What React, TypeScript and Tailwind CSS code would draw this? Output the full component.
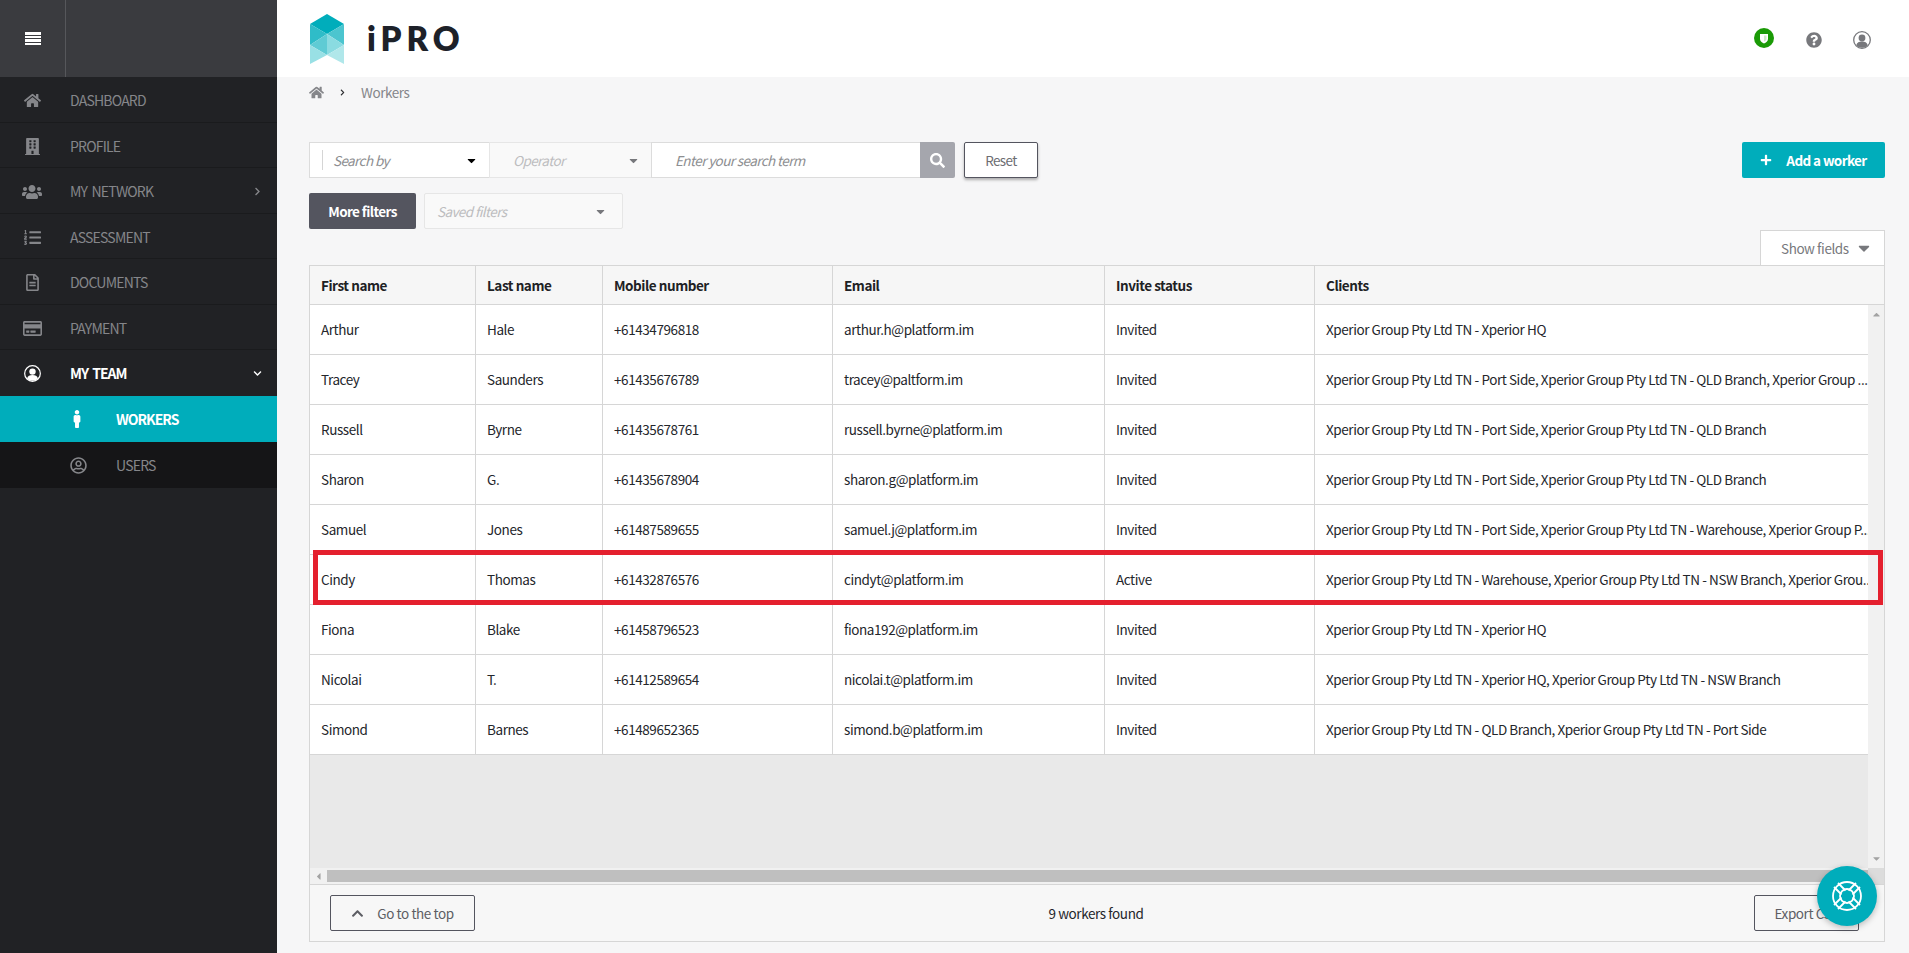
import React from 'react';
import {
  FaHome,
  FaBuilding,
  FaUsers,
  FaListOl,
  FaRegFileAlt,
  FaRegCreditCard,
  FaRegUserCircle,
  FaMale,
  FaQuestionCircle,
  FaSearch,
  FaChevronUp,
  FaPlus,
  FaChevronRight,
  FaChevronDown,
  FaCaretDown,
  FaCaretUp,
  FaCaretLeft,
} from 'react-icons/fa';

const menu = [
  { label: 'DASHBOARD', icon: <FaHome size={17} /> },
  { label: 'PROFILE', icon: <FaBuilding size={17} /> },
  { label: 'MY NETWORK', icon: <FaUsers size={20} />, chevron: true },
  { label: 'ASSESSMENT', icon: <FaListOl size={17} /> },
  { label: 'DOCUMENTS', icon: <FaRegFileAlt size={17} /> },
  { label: 'PAYMENT', icon: <FaRegCreditCard size={19} /> },
];

const rows = [
  ['Arthur', 'Hale', '+61434796818', 'arthur.h@platform.im', 'Invited', 'Xperior Group Pty Ltd TN - Xperior HQ'],
  ['Tracey', 'Saunders', '+61435676789', 'tracey@paltform.im', 'Invited', 'Xperior Group Pty Ltd TN - Port Side, Xperior Group Pty Ltd TN - QLD Branch, Xperior Group ...'],
  ['Russell', 'Byrne', '+61435678761', 'russell.byrne@platform.im', 'Invited', 'Xperior Group Pty Ltd TN - Port Side, Xperior Group Pty Ltd TN - QLD Branch'],
  ['Sharon', 'G.', '+61435678904', 'sharon.g@platform.im', 'Invited', 'Xperior Group Pty Ltd TN - Port Side, Xperior Group Pty Ltd TN - QLD Branch'],
  ['Samuel', 'Jones', '+61487589655', 'samuel.j@platform.im', 'Invited', 'Xperior Group Pty Ltd TN - Port Side, Xperior Group Pty Ltd TN - Warehouse, Xperior Group P...'],
  ['Cindy', 'Thomas', '+61432876576', 'cindyt@platform.im', 'Active', 'Xperior Group Pty Ltd TN - Warehouse, Xperior Group Pty Ltd TN - NSW Branch, Xperior Grou...'],
  ['Fiona', 'Blake', '+61458796523', 'fiona192@platform.im', 'Invited', 'Xperior Group Pty Ltd TN - Xperior HQ'],
  ['Nicolai', 'T.', '+61412589654', 'nicolai.t@platform.im', 'Invited', 'Xperior Group Pty Ltd TN - Xperior HQ, Xperior Group Pty Ltd TN - NSW Branch'],
  ['Simond', 'Barnes', '+61489652365', 'simond.b@platform.im', 'Invited', 'Xperior Group Pty Ltd TN - QLD Branch, Xperior Group Pty Ltd TN - Port Side'],
];

const headers = ['First name', 'Last name', 'Mobile number', 'Email', 'Invite status', 'Clients'];

function Logo() {
  return (
    <div className="flex items-center">
      <svg width="36" height="50" viewBox="0 0 36 50">
        <polygon points="18,0 35,10 18,20 1,10" fill="#00adbb" />
        <polygon points="1,10 18,20 1,31" fill="#2fbcc8" />
        <polygon points="35,10 18,20 35,31" fill="#4cc5cf" />
        <polygon points="18,20 18,41 1,31" fill="#5fcbd4" />
        <polygon points="18,20 18,41 35,31" fill="#8adbe1" />
        <polygon points="1,31 18,41 1,50" fill="#99e0e5" />
        <polygon points="35,31 18,41 35,50" fill="#b0e7ea" />
      </svg>
      <span className="ml-[22px] font-['Lato',sans-serif] text-[33px] font-extrabold tracking-[5px] text-[#1d2129] leading-none">iPRO</span>
    </div>
  );
}

// ring with a person cut off by the circle, used in the top bar and for MY TEAM
function UserRing({ size, color }: { size: number; color: string }) {
  return (
    <svg width={size} height={size} viewBox="0 0 18 18">
      <circle cx="9" cy="9" r="8.300" fill="none" stroke={color} strokeWidth="1.300" />
      <circle cx="9" cy="7" r="3.400" fill={color} />
      <path d="M3.200 14.200C4 11.500 6 10.600 9 10.600s5 .9 5.800 3.600A7.500 7.500 0 0 1 9 16.800a7.500 7.500 0 0 1-5.800-2.600z" fill={color} />
    </svg>
  );
}

function LifeRing() {
  return (
    <svg width="32" height="32" viewBox="0 0 32 32" fill="none" stroke="#fff" strokeWidth="1.800">
      <circle cx="16" cy="16" r="14" />
      <circle cx="16" cy="16" r="7" />
      <path d="M8.500 4.500l7.500 7.500M4.500 8.500l7.500 7.500" transform="translate(-1.500 -1.500)" />
      <path d="M23.500 4.500L16 12M27.500 8.500L20 16" transform="translate(1.500 -1.500)" />
      <path d="M8.500 27.500L16 20M4.500 23.500L12 16" transform="translate(-1.500 1.500)" />
      <path d="M23.500 27.500L16 20M27.500 23.500L20 16" transform="translate(1.500 1.500)" />
    </svg>
  );
}

function Sidebar() {
  return (
    <aside className="w-[277px] shrink-0 bg-[#212225] text-[14px] tracking-[-0.8px] [word-spacing:2px]">
      <div className="flex h-[77px] bg-[#3a3b3f]">
        <div className="flex w-[66px] items-center justify-center border-r border-[#56575b]">
          <div className="flex h-[13px] w-[16px] flex-col justify-between">
            <span className="h-[2.5px] bg-white" />
            <span className="h-[2.5px] bg-white" />
            <span className="h-[2.5px] bg-white" />
            <span className="h-[2.5px] bg-white" />
          </div>
        </div>
      </div>
      {menu.map((item) => (
        <div key={item.label} className="flex h-[45.5px] items-center border-b border-[#1a1b1d] pt-[3px] text-[#85868a]">
          <span className="flex w-[64px] justify-center">{item.icon}</span>
          <span className="ml-[6px]">{item.label}</span>
          {item.chevron && <FaChevronRight size={9} className="ml-auto mr-[15px]" />}
        </div>
      ))}
      <div className="flex h-[46px] items-center font-semibold tracking-[-1px] text-white">
        <span className="flex w-[64px] justify-center"><UserRing size={17} color="#fff" /></span>
        <span className="ml-[6px]">MY TEAM</span>
        <FaChevronDown size={9} className="ml-auto mr-[15px]" />
      </div>
      <div className="flex h-[46px] items-center bg-[#00adbb] font-semibold tracking-[-1px] text-white">
        <span className="flex w-[86px] justify-end"><FaMale size={18} /></span>
        <span className="ml-[30px]">WORKERS</span>
      </div>
      <div className="flex h-[46px] items-center bg-[#151517] text-[#85868a]">
        <span className="flex w-[87px] justify-end"><FaRegUserCircle size={17} /></span>
        <span className="ml-[29px]">USERS</span>
      </div>
    </aside>
  );
}

function Toolbar() {
  return (
    <div className="flex items-start justify-between">
      <div>
        <div className="flex h-[36px] items-stretch italic tracking-[-0.6px]">
          <div className="flex w-[180px] items-center border border-r-0 border-[#dcdcdc] bg-white pl-[12px] pr-[11px] text-[#8d8e91]">
            <span className="h-[20px] border-l border-[#d5d5d5] pl-[10px] leading-[20px]">Search by</span>
            <FaCaretDown size={13} className="ml-auto text-black" />
          </div>
          <div className="flex w-[162px] items-center border-y border-l border-[#e6e6e6] bg-[#f9f9f9] pl-[23px] pr-[11px] text-[#bdbdbf]">
            <span>Operator</span>
            <FaCaretDown size={13} className="ml-auto text-[#77787c]" />
          </div>
          <div className="flex w-[269px] items-center border-y border-l border-[#dcdcdc] bg-white pl-[23px] text-[#8d8e91]">Enter your search term</div>
          <div className="flex w-[35px] items-center justify-center rounded-r-[2px] bg-[#a5a6ad] text-white"><FaSearch size={15} /></div>
          <button className="ml-[9px] w-[74px] rounded-[2px] border border-[#54555f] bg-white not-italic text-[#6c6d72] shadow-[0_2px_3px_rgba(0,0,0,0.3)]">Reset</button>
        </div>
        <div className="mt-[15px] flex h-[36px] items-stretch">
          <button className="w-[107px] rounded-[2px] bg-[#54555f] font-semibold tracking-[-0.6px] text-white">More filters</button>
          <div className="ml-[8px] flex w-[199px] items-center rounded-[2px] border border-[#e6e6e6] bg-[#f9f9f9] pl-[12px] pr-[15px] italic tracking-[-0.6px] text-[#bdbdbf]">
            <span>Saved filters</span>
            <FaCaretDown size={13} className="ml-auto text-[#77787c]" />
          </div>
        </div>
      </div>
      <button className="flex h-[36px] w-[143px] items-center justify-center rounded-[2px] bg-[#00adbb] font-semibold tracking-[-0.6px] text-white">
        <FaPlus size={12} className="mr-[14px]" />
        Add a worker
      </button>
    </div>
  );
}

function WorkersTable() {
  const cols = 'grid grid-cols-[166px_127px_230px_272px_210px_1fr]';
  return (
    <div className="relative border-x border-b border-[#d6d6d6]">
      <div className={`${cols} h-[40px] border-y border-[#d6d6d6] bg-[#f6f6f6] font-semibold tracking-[-0.45px] text-[#202124]`}>
        {headers.map((h) => (
          <div key={h} className="flex items-center border-r border-[#d6d6d6] px-[11px] pt-[1px] last:border-r-0">{h}</div>
        ))}
      </div>
      <div className="flex h-[563px]">
        <div className="flex min-w-0 flex-1 flex-col bg-[#e9e9e9]">
          {rows.map((row) => (
            <div key={row[0]} className={`${cols} h-[50px] border-b border-[#d6d6d6] bg-white text-[#24262b]`}>
              {row.map((cell, i) => (
                <div key={i} className="flex min-w-0 items-center whitespace-nowrap border-r border-[#d6d6d6] px-[11px] last:border-r-0 last:pr-0">
                  {cell}
                </div>
              ))}
            </div>
          ))}
        </div>
        <div className="flex w-[16px] flex-col items-center justify-between bg-[#f1f1f1] py-[4px] text-[#a3a3a3]">
          <FaCaretUp size={11} />
          <FaCaretDown size={11} />
        </div>
      </div>
      <div className="flex h-[16px] items-stretch bg-[#f1f1f1]">
        <span className="flex w-[17px] items-center justify-center text-[#a3a3a3]"><FaCaretLeft size={11} /></span>
        <div className="my-[2px] flex-1 bg-[#bfbfbf]" />
        <div className="w-[16px] bg-[#dcdcdc]" />
      </div>
      <div className="grid h-[57px] grid-cols-[1fr_auto_1fr] items-center border-t border-[#d6d6d6] bg-[#f7f7f7] pl-[20px] pr-[25px] text-[#5d5e64]">
        <button className="flex h-[36px] w-[145px] items-center justify-center rounded-[2px] border border-[#54555f]">
          <FaChevronUp size={13} className="mr-[13px]" />
          Go to the top
        </button>
        <span className="ml-[3px] text-[#24262b]">9 workers found</span>
        <button className="h-[36px] w-[105px] justify-self-end rounded-[2px] border border-[#54555f]">Export CSV</button>
      </div>
      {/* highlight drawn over the Cindy row */}
      <div className="absolute left-[3px] right-[1px] top-[285px] h-[55px] border-[5px] border-[#e4202e]" />
    </div>
  );
}

export default function App() {
  return (
    <div className="flex h-[953px] w-[1909px] overflow-hidden bg-[#f6f6f7] font-['Noto_Sans_CJK_SC','Noto_Sans',sans-serif] text-[13.500px] tracking-[-0.42px]">
      <Sidebar />
      <div className="relative min-w-0 flex-1">
        <header className="flex h-[77px] items-center justify-between bg-white pl-[32px] pr-[38px]">
          <Logo />
          <div className="flex items-center pt-[3px] text-[#77787c]">
            <span className="flex h-[20px] w-[20px] -translate-y-[2px] items-center justify-center rounded-full bg-[#1a9a06]">
              <svg width="10" height="11" viewBox="0 0 10 11">
                <path d="M1 1h8v5c0 2-2 3.600-4 4.500C3 9.600 1 8 1 6z" fill="#fff" />
                <path d="M5 2.500h2.500v3.500c0 1-1.200 1.900-2.500 2.600z" fill="#cfe9c9" />
              </svg>
            </span>
            <FaQuestionCircle size={16} className="ml-[32px]" />
            <span className="ml-[31px] flex"><UserRing size={18} color="#77787c" /></span>
          </div>
        </header>
        <div className="flex h-[30px] items-center pl-[32px] text-[#85868a]">
          <FaHome size={15} />
          <FaChevronRight size={7} className="ml-[15px] text-[#2c2d30]" />
          <span className="ml-[15px]">Workers</span>
        </div>
        <main className="pl-[32px] pr-[24px] pt-[35px]">
          <Toolbar />
          <div className="mt-[1px] flex justify-end">
            <div className="flex h-[35px] w-[125px] items-center border border-b-0 border-[#d6d6d6] bg-white pl-[20px] pr-[11px] text-[#77787c]">
              Show fields
              <FaCaretDown size={18} className="ml-auto" />
            </div>
          </div>
          <WorkersTable />
        </main>
        <div className="absolute right-[32px] top-[866px] flex h-[60px] w-[60px] items-center justify-center rounded-full bg-[#00adbb] shadow-[0_2px_6px_rgba(0,0,0,0.25)]">
          <LifeRing />
        </div>
      </div>
    </div>
  );
}
